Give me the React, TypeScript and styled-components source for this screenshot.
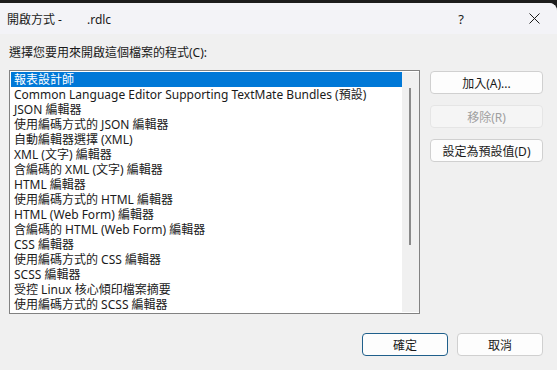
import { type FC } from "react";
import styled, { createGlobalStyle } from "styled-components";

const Global = createGlobalStyle`
  html, body {
    margin: 0;
    padding: 0;
    background: #1c1c1c;
  }
  body {
    font-family: "Noto Sans", "Noto Sans CJK TC", sans-serif;
    font-size: 12px;
    color: #1a1a1a;
  }
`;

const Frame = styled.div`
  width: 557px;
  height: 370px;
  padding-top: 3px;
  box-sizing: border-box;
  overflow: hidden;
`;

const Window = styled.div`
  height: 367px;
  background: #f0f0f0;
  border-top-right-radius: 8px;
  display: flex;
  flex-direction: column;
  overflow: hidden;
`;

const TitleBar = styled.div`
  height: 31px;
  background: #f3f3f7;
  display: flex;
  align-items: center;
  padding-left: 7px;
`;

const Title = styled.div`
  flex: 1;
  white-space: pre;
  font-size: 12px;
  color: #1a1a1a;
`;

const TitleButton = styled.div<{ $w: number; $gap?: number }>`
  width: ${(p) => p.$w}px;
  margin-right: ${(p) => p.$gap ?? 0}px;
  height: 31px;
  display: flex;
  align-items: center;
  justify-content: center;
  font-size: 13px;
  color: #1a1a1a;
`;

const Body = styled.div`
  flex: 1;
  display: flex;
  flex-direction: column;
  padding: 11px 14px 0 9px;
`;

const Label = styled.div`
  height: 15px;
  line-height: 15px;
  margin-bottom: 10px;
`;

const Main = styled.div`
  display: flex;
  gap: 10px;
`;

const ListBox = styled.div`
  width: 411px;
  height: 244px;
  box-sizing: border-box;
  border: 1px solid #828282;
  background: #fff;
  display: flex;
  padding: 1px 0 1px 1px;
`;

const Items = styled.div`
  flex: 1;
  overflow: hidden;
`;

const Item = styled.div<{ $selected?: boolean }>`
  height: 15px;
  line-height: 15px;
  padding-left: 3px;
  white-space: nowrap;
  overflow: hidden;
  background: ${(p) => (p.$selected ? "#0078d7" : "transparent")};
  color: ${(p) => (p.$selected ? "#fff" : "#1a1a1a")};
`;

const ScrollTrack = styled.div`
  width: 17px;
  background: #f0f0f0;
  position: relative;
`;

const Thumb = styled.div`
  position: absolute;
  left: 7px;
  top: 16px;
  width: 2px;
  height: 157px;
  background: #8a8a8a;
`;

const Side = styled.div`
  width: 113px;
  display: flex;
  flex-direction: column;
  gap: 11px;
  padding-top: 1px;
`;

const Button = styled.button<{ $primary?: boolean; $w?: number }>`
  width: ${(p) => p.$w ?? 113}px;
  height: 23px;
  box-sizing: border-box;
  border-radius: 4px;
  border: 1px solid ${(p) => (p.$primary ? "#1f5f8b" : "#d0d0d0")};
  background: #fdfdfd;
  font-family: inherit;
  font-size: 12px;
  color: #1a1a1a;
  padding: 0;
  &:disabled {
    background: #f5f5f5;
    border-color: #e5e5e5;
    color: #a0a0a0;
  }
`;

const Footer = styled.div`
  display: flex;
  justify-content: flex-end;
  gap: 9px;
  margin-top: 19px;
`;

const items = [
  "報表設計師",
  "Common Language Editor Supporting TextMate Bundles (預設)",
  "JSON 編輯器",
  "使用編碼方式的 JSON 編輯器",
  "自動編輯器選擇 (XML)",
  "XML (文字) 編輯器",
  "含編碼的 XML (文字) 編輯器",
  "HTML 編輯器",
  "使用編碼方式的 HTML 編輯器",
  "HTML (Web Form) 編輯器",
  "含編碼的 HTML (Web Form) 編輯器",
  "CSS 編輯器",
  "使用編碼方式的 CSS 編輯器",
  "SCSS 編輯器",
  "受控 Linux 核心傾印檔案摘要",
  "使用編碼方式的 SCSS 編輯器",
];

const App: FC = () => {
  return (
    <Frame>
      <Global />
      <Window>
        <TitleBar>
          <Title>{"開啟方式 -        .rdlc"}</Title>
          <TitleButton $w={46} $gap={28}>?</TitleButton>
          <TitleButton $w={45}>
            <svg width="11" height="11" viewBox="0 0 11 11">
              <path d="M0.5 0.5 L10.5 10.5 M10.5 0.5 L0.5 10.5" stroke="#1a1a1a" strokeWidth="1" />
            </svg>
          </TitleButton>
        </TitleBar>
        <Body>
          <Label>選擇您要用來開啟這個檔案的程式(C):</Label>
          <Main>
            <ListBox>
              <Items>
                {items.map((t, i) => (
                  <Item key={t} $selected={i === 0}>
                    {t}
                  </Item>
                ))}
              </Items>
              <ScrollTrack>
                <Thumb />
              </ScrollTrack>
            </ListBox>
            <Side>
              <Button>加入(A)...</Button>
              <Button disabled>移除(R)</Button>
              <Button>設定為預設值(D)</Button>
            </Side>
          </Main>
          <Footer>
            <Button $primary $w={86}>確定</Button>
            <Button $w={86}>取消</Button>
          </Footer>
        </Body>
      </Window>
    </Frame>
  );
};

export default App;
